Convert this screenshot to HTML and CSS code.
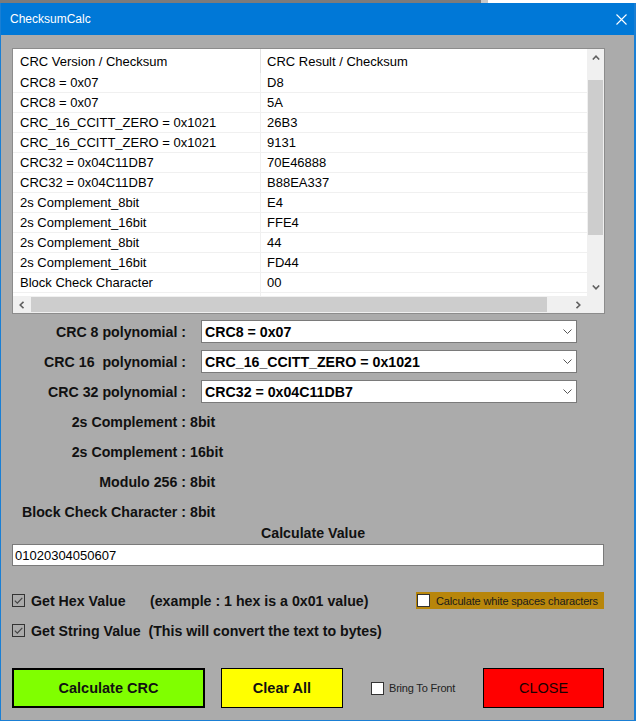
FILE: index.html
```html
<!DOCTYPE html>
<html>
<head>
<meta charset="utf-8">
<title>ChecksumCalc</title>
<link rel="stylesheet" href="styles.css">
</head>
<body>
<div class="topstrip"><div class="ts-dark"></div><div class="ts-mid"></div></div>
<div class="window">
  <div class="titlebar">
    <span class="title">ChecksumCalc</span>
    <svg class="close-x" width="11" height="11" viewBox="0 0 11 11"><path d="M0.5 0.5 L10.5 10.5 M10.5 0.5 L0.5 10.5" stroke="#fff" stroke-width="1.1" fill="none"/></svg>
  </div>
  <div class="client">
    <div class="grid">
      <div class="grid-main">
        <div class="grid-data">
          <div class="row header"><div class="c1">CRC Version / Checksum</div><div class="c2">CRC Result / Checksum</div></div>
          <div class="row"><div class="c1">CRC8 = 0x07</div><div class="c2">D8</div></div>
          <div class="row"><div class="c1">CRC8 = 0x07</div><div class="c2">5A</div></div>
          <div class="row"><div class="c1">CRC_16_CCITT_ZERO = 0x1021</div><div class="c2">26B3</div></div>
          <div class="row"><div class="c1">CRC_16_CCITT_ZERO = 0x1021</div><div class="c2">9131</div></div>
          <div class="row"><div class="c1">CRC32 = 0x04C11DB7</div><div class="c2">70E46888</div></div>
          <div class="row"><div class="c1">CRC32 = 0x04C11DB7</div><div class="c2">B88EA337</div></div>
          <div class="row"><div class="c1">2s Complement_8bit</div><div class="c2">E4</div></div>
          <div class="row"><div class="c1">2s Complement_16bit</div><div class="c2">FFE4</div></div>
          <div class="row"><div class="c1">2s Complement_8bit</div><div class="c2">44</div></div>
          <div class="row"><div class="c1">2s Complement_16bit</div><div class="c2">FD44</div></div>
          <div class="row"><div class="c1">Block Check Character</div><div class="c2">00</div></div>
          <div class="row"><div class="c1"></div><div class="c2"></div></div>
        </div>
        <div class="vscroll">
          <div class="sbtn"><svg width="8" height="5" viewBox="0 0 8 5"><path d="M0.8 4.5 L4 1.2 L7.2 4.5" stroke="#606060" stroke-width="1.6" fill="none"/></svg></div>
          <div class="vgap"></div>
          <div class="vthumb"></div>
          <div class="vrest"></div>
          <div class="sbtn"><svg width="8" height="5" viewBox="0 0 8 5"><path d="M0.8 0.5 L4 3.8 L7.2 0.5" stroke="#606060" stroke-width="1.6" fill="none"/></svg></div>
        </div>
      </div>
      <div class="hscroll-row">
        <div class="hscroll">
          <div class="sbtn"><svg width="5" height="8" viewBox="0 0 5 8"><path d="M4.5 0.8 L1.2 4 L4.5 7.2" stroke="#606060" stroke-width="1.6" fill="none"/></svg></div>
          <div class="hthumb"></div>
          <div class="hrest"></div>
          <div class="sbtn"><svg width="5" height="8" viewBox="0 0 5 8"><path d="M0.5 0.8 L3.8 4 L0.5 7.2" stroke="#606060" stroke-width="1.6" fill="none"/></svg></div>
        </div>
        <div class="corner"></div>
      </div>
    </div>

    <div class="frow first">
      <div class="flabel">CRC 8 polynomial :</div>
      <div class="combo"><span>CRC8 = 0x07</span><svg width="9" height="5" viewBox="0 0 9 5"><path d="M0.5 0.5 L4.5 4.5 L8.5 0.5" stroke="#555" stroke-width="1" fill="none"/></svg></div>
    </div>
    <div class="frow">
      <div class="flabel">CRC 16&nbsp; polynomial :</div>
      <div class="combo"><span>CRC_16_CCITT_ZERO = 0x1021</span><svg width="9" height="5" viewBox="0 0 9 5"><path d="M0.5 0.5 L4.5 4.5 L8.5 0.5" stroke="#555" stroke-width="1" fill="none"/></svg></div>
    </div>
    <div class="frow">
      <div class="flabel">CRC 32 polynomial :</div>
      <div class="combo"><span>CRC32 = 0x04C11DB7</span><svg width="9" height="5" viewBox="0 0 9 5"><path d="M0.5 0.5 L4.5 4.5 L8.5 0.5" stroke="#555" stroke-width="1" fill="none"/></svg></div>
    </div>
    <div class="frow">
      <div class="flabel">2s Complement :</div><div class="fval">8bit</div>
    </div>
    <div class="frow">
      <div class="flabel">2s Complement :</div><div class="fval">16bit</div>
    </div>
    <div class="frow">
      <div class="flabel">Modulo 256 :</div><div class="fval">8bit</div>
    </div>
    <div class="frow">
      <div class="flabel">Block Check Character :</div><div class="fval">8bit</div>
    </div>

    <div class="calc-title">Calculate Value</div>
    <div class="textbox">01020304050607</div>

    <div class="cbrow first">
      <div class="cb checked"><svg width="11" height="11" viewBox="0 0 11 11"><path d="M1.8 5.6 L4.3 8.1 L9.3 2.8" stroke="#444" stroke-width="1.2" fill="none"/></svg></div>
      <span class="cbtext hex">Get Hex Value</span>
      <span class="cbtext">(example : 1 hex is a 0x01 value)</span>
      <div class="ws"><div class="cb white"></div><span>Calculate white spaces characters</span></div>
    </div>
    <div class="cbrow second">
      <div class="cb checked"><svg width="11" height="11" viewBox="0 0 11 11"><path d="M1.8 5.6 L4.3 8.1 L9.3 2.8" stroke="#444" stroke-width="1.2" fill="none"/></svg></div>
      <span class="cbtext pre">Get String Value  (This will convert the text to bytes)</span>
    </div>

    <div class="buttons">
      <div class="btn btn-calc">Calculate CRC</div>
      <div class="btn btn-clear">Clear All</div>
      <div class="bring"><div class="cb white"></div><span>Bring To Front</span></div>
      <div class="btn btn-close">CLOSE</div>
    </div>
  </div>
</div>
</body>
</html>
```
FILE: styles.css
```css
html, body {
  margin: 0;
  padding: 0;
}
body {
  width: 638px;
  height: 722px;
  overflow: hidden;
  background: #ffffff;
  font-family: "Liberation Sans", Arial, sans-serif;
  color: #000;
}
.topstrip {
  height: 3px;
  display: flex;
}
.ts-dark {
  width: 481px;
  background: #7b7b7b;
}
.ts-mid {
  width: 7px;
  background: #c8c8c8;
}
.window {
  width: 636px;
  box-sizing: border-box;
  border-left: 1px solid #1a7fd4;
  border-right: 2px solid #1a7fd4;
  border-bottom: 1px solid #1a7fd4;
}
.titlebar {
  height: 32px;
  background: #0078d7;
  display: flex;
  align-items: center;
  justify-content: space-between;
  padding: 0 7px 0 9px;
  color: #fff;
  font-size: 12px;
}
.close-x {
  display: block;
}
.client {
  background: #ababab;
  height: 685px;
  box-sizing: border-box;
  padding: 13px 30px 0 11px;
}

/* grid */
.grid {
  width: 593px;
  height: 266px;
  box-sizing: border-box;
  border: 1px solid #8c8c8c;
  background: #fff;
  display: flex;
  flex-direction: column;
}
.grid-main {
  display: flex;
  height: 247px;
}
.grid-data {
  width: 574px;
  overflow: hidden;
}
.row {
  display: flex;
  height: 20px;
  box-sizing: border-box;
  border-bottom: 1px solid #f0f0f0;
  font-size: 13px;
}
.row.header {
  height: 24px;
  border-bottom: none;
}
.c1 {
  width: 248px;
  box-sizing: border-box;
  padding-left: 7px;
  border-right: 1px solid #f0f0f0;
  display: flex;
  align-items: center;
  white-space: nowrap;
}
.header .c1 {
  border-right-color: #e3e3e3;
}
.c2 {
  flex: 1;
  padding-left: 6px;
  display: flex;
  align-items: center;
}
.vscroll {
  width: 17px;
  background: #f0f0f0;
  display: flex;
  flex-direction: column;
}
.sbtn {
  width: 17px;
  height: 17px;
  flex: 0 0 17px;
  display: flex;
  align-items: center;
  justify-content: center;
}
.vgap {
  height: 14px;
}
.vthumb {
  height: 155px;
  margin: 0 1px;
  background: #cdcdcd;
}
.vrest {
  flex: 1;
}
.hscroll-row {
  display: flex;
  height: 17px;
}
.hscroll {
  width: 574px;
  background: #f0f0f0;
  display: flex;
}
.hthumb {
  width: 516px;
  margin: 1px 0 1px 1px;
  background: #cdcdcd;
}
.hrest {
  flex: 1;
}
.corner {
  width: 17px;
  background: #f0f0f0;
}

/* form rows */
.frow {
  display: flex;
  align-items: center;
  height: 23px;
  margin-top: 7px;
  font-weight: bold;
  font-size: 14.2px;
  color: #111;
}
.frow.first {
  margin-top: 6px;
}
.flabel {
  width: 174px;
  text-align: right;
  white-space: nowrap;
}
.fval {
  margin-left: 4px;
}
.combo {
  margin-left: 15px;
  width: 376px;
  height: 23px;
  box-sizing: border-box;
  border: 1px solid #7a7a7a;
  background: #fff;
  display: flex;
  align-items: center;
  justify-content: space-between;
  padding: 0 4px 0 3px;
  color: #000;
}
.combo svg {
  display: block;
}
.calc-title {
  margin-top: 1px;
  height: 18px;
  line-height: 18px;
  padding-left: 249px;
  font-weight: bold;
  font-size: 14.2px;
  color: #111;
}
.textbox {
  margin-top: 2px;
  width: 592px;
  height: 22px;
  box-sizing: border-box;
  border: 1px solid #7a7a7a;
  background: #fff;
  padding-left: 2px;
  font-size: 13px;
  display: flex;
  align-items: center;
}

/* checkbox rows */
.cbrow {
  display: flex;
  align-items: center;
  height: 17px;
  font-weight: bold;
  font-size: 14.2px;
  color: #111;
}
.cbrow.first {
  margin-top: 26px;
}
.cbrow.second {
  margin-top: 13px;
}
.cb {
  width: 13px;
  height: 13px;
  box-sizing: border-box;
  border: 1px solid #333;
  display: flex;
  align-items: center;
  justify-content: center;
  flex: 0 0 13px;
}
.cb.white {
  background: #fff;
}
.cb svg {
  display: block;
}
.cbtext {
  margin-left: 6px;
  white-space: nowrap;
}
.cbtext.hex {
  width: 113px;
}
.cbtext.pre {
  white-space: pre;
}
.ws {
  margin-left: auto;
  width: 188px;
  height: 17px;
  background: #b8860b;
  display: flex;
  align-items: center;
  padding-left: 1px;
  box-sizing: border-box;
  font-weight: normal;
  font-size: 11px;
  letter-spacing: -0.15px;
  color: #1a1a1a;
}
.ws span {
  margin-left: 6px;
}

/* buttons */
.buttons {
  display: flex;
  align-items: center;
  margin-top: 29px;
  height: 40px;
}
.btn {
  height: 40px;
  box-sizing: border-box;
  border: 1px solid #000;
  display: flex;
  align-items: center;
  justify-content: center;
  font-size: 14.5px;
  font-weight: bold;
  color: #111;
}
.btn-calc {
  width: 193px;
  border-width: 2px;
  background: #80ff00;
}
.btn-clear {
  width: 122px;
  margin-left: 16px;
  background: #ffff00;
}
.bring {
  margin-left: 28px;
  display: flex;
  align-items: center;
  font-size: 11px;
  letter-spacing: -0.2px;
  color: #222;
}
.bring span {
  margin-left: 5px;
}
.btn-close {
  margin-left: auto;
  width: 121px;
  background: #ff0000;
  font-weight: normal;
  color: #1a0000;
}
```
